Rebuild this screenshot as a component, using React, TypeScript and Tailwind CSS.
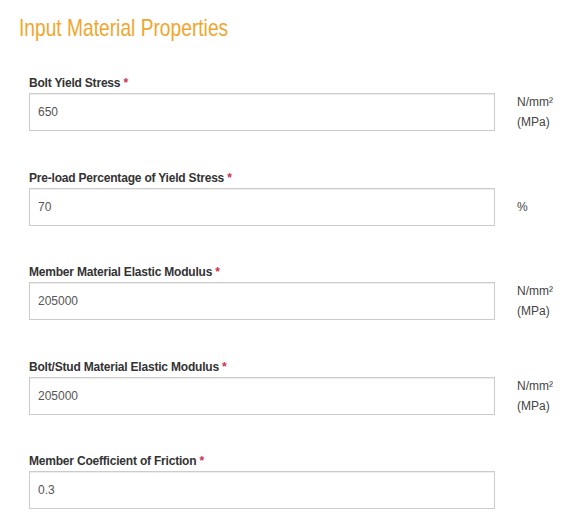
const fields = [
  { label: 'Bolt Yield Stress', value: '650', unit: ['N/mm²', '(MPa)'] },
  { label: 'Pre-load Percentage of Yield Stress', value: '70', unit: ['%'] },
  { label: 'Member Material Elastic Modulus', value: '205000', unit: ['N/mm²', '(MPa)'] },
  { label: 'Bolt/Stud Material Elastic Modulus', value: '205000', unit: ['N/mm²', '(MPa)'] },
  { label: 'Member Coefficient of Friction', value: '0.3', unit: [] as string[] },
];

export default function App() {
  return (
    <div className="w-[576px] h-[528px] bg-white overflow-hidden font-['Liberation_Sans',Arial,sans-serif]">
      <h2 className="pl-[19px] pt-[15px] text-[24px] leading-[26px] text-[#f0a62e] font-normal">
        <span className="inline-block origin-left scale-x-[0.8] whitespace-nowrap">Input Material Properties</span>
      </h2>
      <form className="pl-[29px] pt-[34px] flex flex-col gap-[38.5px]">
        {fields.map((f) => (
          <div key={f.label}>
            <label className="block text-[12px] leading-[17px] font-bold text-[#333] mb-px tracking-[-0.2px]">
              {f.label} <span className="text-[#d0314f]">*</span>
            </label>
            <div className="flex items-center h-[38px]">
              <input
                readOnly
                value={f.value}
                className="w-[466px] h-[38px] border border-[#ccc] bg-white px-[8px] text-[12px] text-[#555] shadow-[inset_0_1px_1px_rgba(0,0,0,0.075)] outline-none"
              />
              <div className="ml-[22px] text-[12px] leading-[20px] text-[#444]">
                {f.unit.map((u) => (
                  <div key={u}>{u}</div>
                ))}
              </div>
            </div>
          </div>
        ))}
      </form>
    </div>
  );
}
